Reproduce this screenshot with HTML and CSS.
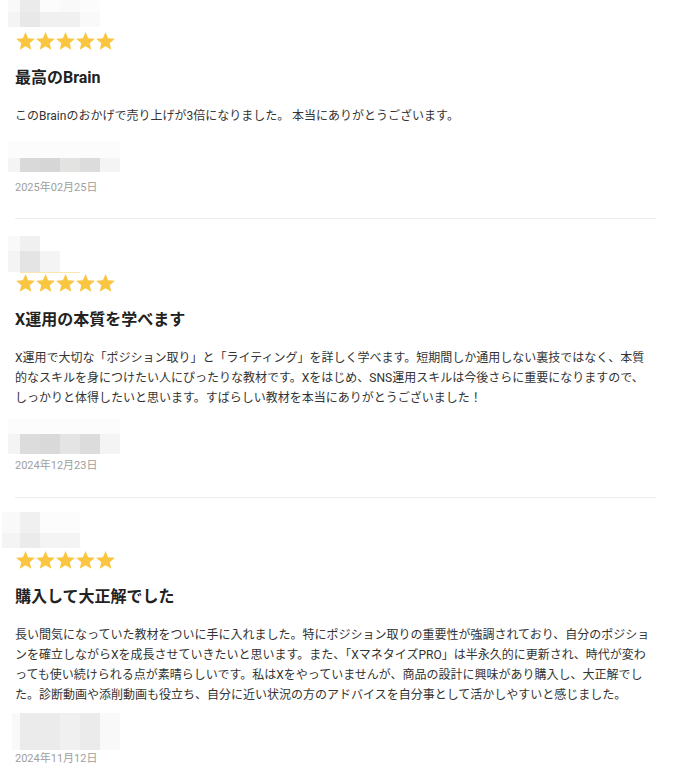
FILE: index.html
```html
<!DOCTYPE html>
<html lang="ja">
<head>
<meta charset="utf-8">
<link rel="stylesheet" href="styles.css">
</head>
<body>
<svg width="0" height="0" class="defs">
  <defs>
    <symbol id="star" viewBox="2 2 20 19.3">
      <path d="M12 17.27L18.18 21l-1.64-7.03L22 9.24l-7.19-.61L12 2 9.19 8.63 2 9.24l5.46 4.73L5.82 21z"/>
    </symbol>
  </defs>
</svg>
<main class="reviews">

  <article class="review review-1">
    <div class="mosaic m1">
      <i class="s8"></i><i class="s5"></i><i class="s9"></i><i class="s8"></i><i class="s9"></i>
      <i class="s7"></i><i class="s4"></i><i class="s6"></i><i class="s6"></i><i class="s8"></i>
    </div>
    <div class="stars">
      <svg class="star"><use href="#star"/></svg><svg class="star"><use href="#star"/></svg><svg class="star"><use href="#star"/></svg><svg class="star"><use href="#star"/></svg><svg class="star"><use href="#star"/></svg>
    </div>
    <h2 class="title">最高のBrain</h2>
    <p class="body">このBrainのおかげで売り上げが3倍になりました。 本当にありがとうございます。</p>
    <div class="mosaic m2">
      <i class="s9"></i><i class="s9"></i><i class="s9"></i><i class="s9"></i><i class="s9"></i><i class="s9"></i>
      <i class="s7"></i><i class="d2"></i><i class="d1"></i><i class="d4"></i><i class="d3"></i><i class="s7"></i>
    </div>
    <div class="date">2025年02月25日</div>
  </article>

  <article class="review review-2">
    <div class="mosaic m3">
      <i class="s8"></i><i class="s6"></i><i class="s0"></i>
      <i class="s7"></i><i class="d5"></i><i class="s7"></i>
    </div>
    <div class="gold-line"></div>
    <div class="stars">
      <svg class="star"><use href="#star"/></svg><svg class="star"><use href="#star"/></svg><svg class="star"><use href="#star"/></svg><svg class="star"><use href="#star"/></svg><svg class="star"><use href="#star"/></svg>
    </div>
    <h2 class="title">X運用の本質を学べます</h2>
    <p class="body">X運用で大切な「ポジション取り」と「ライティング」を詳しく学べます。短期間しか通用しない裏技ではなく、本質的なスキルを身につけたい人にぴったりな教材です。Xをはじめ、SNS運用スキルは今後さらに重要になりますので、しっかりと体得したいと思います。すばらしい教材を本当にありがとうございました！</p>
    <div class="mosaic m4">
      <i class="s9"></i><i class="s9"></i><i class="s9"></i><i class="s9"></i><i class="s9"></i><i class="s9"></i>
      <i class="s7"></i><i class="d3"></i><i class="d2"></i><i class="d5"></i><i class="d3"></i><i class="s7"></i>
    </div>
    <div class="date">2024年12月23日</div>
  </article>

  <article class="review review-3">
    <div class="mosaic m5">
      <i class="s8"></i><i class="s6"></i><i class="s9"></i><i class="s9"></i>
      <i class="s7"></i><i class="s5"></i><i class="s7"></i><i class="s7"></i>
    </div>
    <div class="stars">
      <svg class="star"><use href="#star"/></svg><svg class="star"><use href="#star"/></svg><svg class="star"><use href="#star"/></svg><svg class="star"><use href="#star"/></svg><svg class="star"><use href="#star"/></svg>
    </div>
    <h2 class="title">購入して大正解でした</h2>
    <p class="body">長い間気になっていた教材をついに手に入れました。特にポジション取りの重要性が強調されており、自分のポジションを確立しながらXを成長させていきたいと思います。また、「XマネタイズPRO」は半永久的に更新され、時代が変わっても使い続けられる点が素晴らしいです。私はXをやっていませんが、商品の設計に興味があり購入し、大正解でした。診断動画や添削動画も役立ち、自分に近い状況の方のアドバイスを自分事として活かしやすいと感じました。</p>
    <div class="mosaic m6">
      <i class="s8"></i><i class="s5"></i><i class="s5"></i><i class="s6"></i><i class="s5"></i><i class="s8"></i>
    </div>
    <div class="date">2024年11月12日</div>
  </article>

</main>
</body>
</html>
```

FILE: styles.css
```css
html, body {
  margin: 0;
  padding: 0;
  background: #ffffff;
}

body {
  font-family: Roboto, "Noto Sans CJK JP", sans-serif;
  color: #222222;
  width: 673px;
  overflow: hidden;
}

.defs {
  position: absolute;
  width: 0;
  height: 0;
}

.reviews {
  padding: 0 17px 0 15px;
}

.review {
  display: flex;
  flex-direction: column;
  align-items: flex-start;
}

.review + .review {
  border-top: 1px solid #ececec;
}

/* mosaic (blurred user names) */
.mosaic {
  display: grid;
}
.mosaic i {
  display: block;
}
.m1 {
  margin-left: -7px;
  grid-template-columns: 12px repeat(4, 20px);
  grid-template-rows: 12px 15px;
}
.m2 {
  margin-left: -7px;
  margin-top: 15px;
  grid-template-columns: 12px repeat(5, 20px);
  grid-template-rows: 17px 14px;
}
.m3 {
  margin-left: -7px;
  margin-top: 17px;
  grid-template-columns: 12px repeat(2, 20px);
  grid-template-rows: 15px 21px;
}
.m4 {
  margin-left: -7px;
  margin-top: 11px;
  grid-template-columns: 12px repeat(5, 20px);
  grid-template-rows: 15px 20px;
}
.m5 {
  margin-left: -13px;
  margin-top: 14px;
  grid-template-columns: 18px repeat(3, 20px);
  grid-template-rows: 21px 15px;
}
.m6 {
  margin-left: -3px;
  margin-top: 8px;
  grid-template-columns: 8px repeat(5, 20px);
  grid-template-rows: 37px;
}

.s0 { background: #ffffff; }
.s9 { background: #fcfcfc; }
.s8 { background: #f9f9f9; }
.s7 { background: #f4f4f4; }
.s6 { background: #f0f0f0; }
.s5 { background: #ebebeb; }
.s4 { background: #e8e8e8; }
.d5 { background: #e4e4e4; }
.d4 { background: #e3e3e1; }
.d3 { background: #dcdcdc; }
.d2 { background: #d9d9d9; }
.d1 { background: #d6d6d6; }

.gold-line {
  margin-left: 5px;
  width: 60px;
  height: 1px;
  background: #fde7ae;
}

.stars {
  display: flex;
  gap: 1px;
  margin-top: 5px;
  margin-left: 1px;
}
.review-2 .stars {
  margin-top: 1px;
}
.review-3 .stars {
  margin-top: 3px;
}

.star {
  width: 19px;
  height: 18px;
  fill: #fac640;
}

.title {
  margin: 16px 0 0;
  font-size: 16px;
  line-height: 24px;
  font-weight: 700;
  color: #222222;
}

.body {
  margin: 16px 0 0;
  max-width: 636px;
  font-size: 12px;
  line-height: 20px;
  color: #333333;
}

.date {
  margin-top: 8px;
  font-size: 11px;
  line-height: 16px;
  color: #a0a0a0;
}
.review-2 .date {
  margin-top: 4px;
}
.review-3 .date {
  margin-top: 1px;
}

.review-1 {
  padding-bottom: 22px;
}
.review-2 {
  padding-bottom: 23px;
}
```
